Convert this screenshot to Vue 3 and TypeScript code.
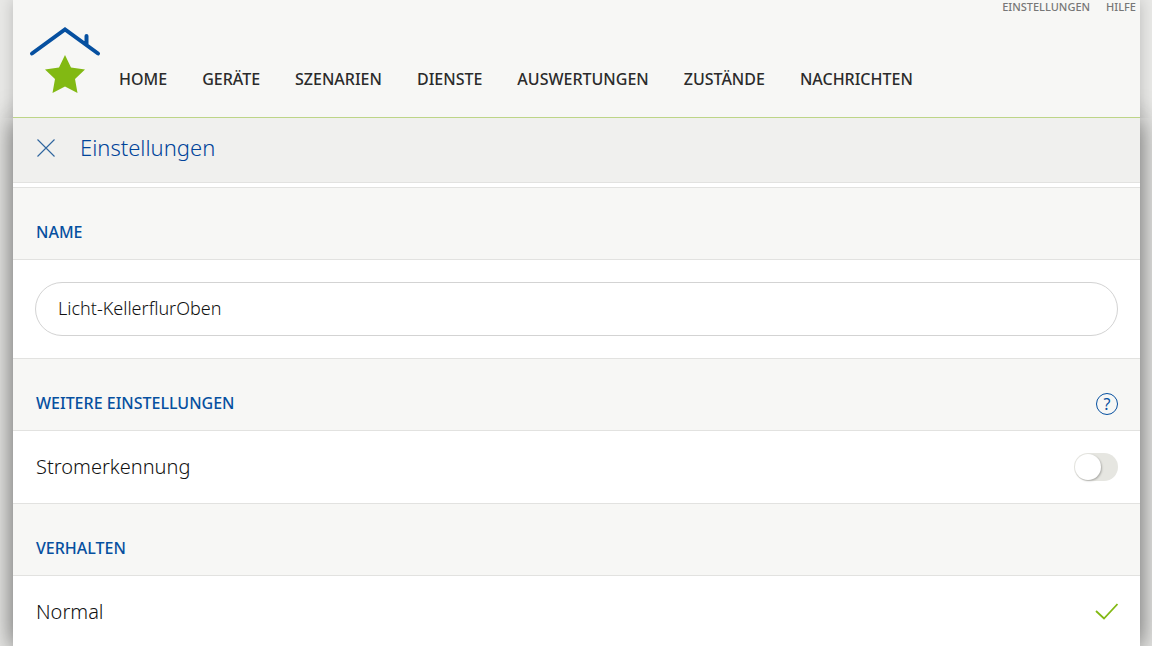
<script setup lang="ts">
import { ref } from 'vue'

const navItems: string[] = [
  'HOME',
  'GERÄTE',
  'SZENARIEN',
  'DIENSTE',
  'AUSWERTUNGEN',
  'ZUSTÄNDE',
  'NACHRICHTEN',
]

const deviceName = ref('Licht-KellerflurOben')
const powerDetection = ref(false)
const behaviour = ref('normal')
</script>

<template>
  <div class="page">
    <header class="top">
      <a class="logo" href="#" aria-label="Startseite">
        <svg width="72" height="68" viewBox="0 0 72 68" aria-hidden="true">
          <path
            d="M3 27.500 L36 3.500 L69 27.500 M57.500 18 V10"
            fill="none"
            stroke="#0650a0"
            stroke-width="4"
            stroke-linecap="round"
            stroke-linejoin="miter"
          />
          <path
            d="M36 29 L42 41.500 L56 43.500 L46 53 L48.500 67 L36 60.500 L23.500 67 L26 53 L16 43.500 L30 41.500 Z"
            fill="#82b913"
          />
        </svg>
      </a>
      <nav class="main-nav">
        <a v-for="item in navItems" :key="item" href="#">{{ item }}</a>
      </nav>
      <nav class="meta-nav">
        <a href="#">EINSTELLUNGEN</a>
        <a href="#">HILFE</a>
      </nav>
    </header>

    <main class="content">
      <div class="title-bar">
        <button class="close" type="button" aria-label="Schließen">
          <svg width="20" height="20" viewBox="0 0 20 20" aria-hidden="true">
            <path d="M1.500 1.500 L18.500 18.500 M18.500 1.500 L1.500 18.500" fill="none" stroke="#2f659f" stroke-width="1.100" />
          </svg>
        </button>
        <h1>Einstellungen</h1>
      </div>

      <section>
        <div class="section-head">
          <h2><label for="device-name">NAME</label></h2>
        </div>
        <div class="field">
          <input id="device-name" v-model="deviceName" type="text" />
        </div>
      </section>

      <section>
        <div class="section-head">
          <h2>WEITERE EINSTELLUNGEN</h2>
          <button class="help" type="button" aria-label="Hilfe">?</button>
        </div>
        <div class="row">
          <label for="power-detection">Stromerkennung</label>
          <input id="power-detection" v-model="powerDetection" class="switch" type="checkbox" role="switch" />
        </div>
      </section>

      <section>
        <div class="section-head">
          <h2>VERHALTEN</h2>
        </div>
        <div class="row">
          <label for="behaviour-normal">Normal</label>
          <span class="choice">
            <input id="behaviour-normal" v-model="behaviour" type="radio" name="behaviour" value="normal" />
            <svg v-if="behaviour === 'normal'" width="24" height="20" viewBox="0 0 24 20" aria-hidden="true">
              <path d="M2 9 L10 16.500 L23.500 2" fill="none" stroke="#82b913" stroke-width="1.800" />
            </svg>
          </span>
        </div>
      </section>
    </main>
  </div>
</template>

<style>
html {
  background: #e8e8e6;
  scrollbar-width: none;
}

body {
  margin: 0;
}
</style>

<style scoped>
* {
  box-sizing: border-box;
}

.page {
  display: flex;
  flex-direction: column;
  min-height: 100vh;
  padding: 0 12px 0 13px;
  overflow: hidden;
  font-family: 'Noto Sans', 'Open Sans', sans-serif;
  color: #333;
}

.top {
  position: relative;
  z-index: 1;
  display: flex;
  align-items: flex-end;
  height: 118px;
  border-bottom: 1px solid #bdd587;
  background: #f7f7f5;
  box-shadow: 0 0 14px rgba(0, 0, 0, 0.2);
  clip-path: inset(0 -13px 0 -13px);
}

.logo {
  display: block;
  margin: 0 18px 23px 16px;
}

.logo svg {
  display: block;
}

.main-nav {
  display: flex;
  gap: 35px;
  flex: 1;
  padding-bottom: 26px;
}

.main-nav a {
  font-size: 16px;
  font-weight: 500;
  line-height: 24px;
  color: #2b2b2b;
  text-decoration: none;
}

.meta-nav {
  display: flex;
  align-self: flex-start;
  gap: 16px;
  padding-right: 4px;
}

.meta-nav a {
  font-size: 11px;
  font-weight: 500;
  line-height: 14px;
  color: #777;
  text-decoration: none;
}

.content {
  flex: 1;
  background: #fff;
  box-shadow: 0 0 24px rgba(0, 0, 0, 0.6);
}

.title-bar {
  display: flex;
  align-items: center;
  gap: 24px;
  height: 65px;
  margin-bottom: 4px;
  padding: 0 23px 5px;
  border-bottom: 1px solid #e2e2e0;
  background: #f0f0ee;
}

.close {
  display: flex;
  padding: 0;
  border: 0;
  background: none;
}

h1 {
  margin: 0;
  padding-bottom: 2px;
  font-size: 22px;
  font-weight: 300;
  line-height: 32px;
  color: #00449a;
}

.section-head {
  display: flex;
  align-items: center;
  justify-content: space-between;
  height: 73px;
  padding: 18px 22px 0 23px;
  border-top: 1px solid #e2e2e0;
  border-bottom: 1px solid #e2e2e0;
  background: #f7f7f5;
}

h2 {
  margin: 0;
  padding-bottom: 2px;
  font-size: 16px;
  font-weight: 500;
  line-height: 24px;
  color: #0650a0;
}

.help {
  width: 22px;
  height: 22px;
  padding: 0;
  border: 1px solid #0650a0;
  border-radius: 50%;
  background: none;
  font-family: inherit;
  font-size: 16px;
  line-height: 20px;
  color: #0650a0;
}

.field {
  padding: 22px;
}

.field input {
  display: block;
  width: 100%;
  height: 54px;
  padding: 0 22px 2px;
  border: 1px solid #d3d3d3;
  border-radius: 27px;
  outline: none;
  background: #fff;
  font-family: inherit;
  font-size: 18px;
  font-weight: 300;
  color: #111;
}

.row {
  display: flex;
  align-items: center;
  justify-content: space-between;
  height: 72px;
  padding: 0 22px 0 23px;
  font-size: 20px;
  font-weight: 300;
  line-height: 28px;
  color: #111;
}

.switch {
  display: flex;
  width: 44px;
  height: 28px;
  margin: 0;
  padding: 1px;
  border-radius: 14px;
  background: #e6e6e1;
  appearance: none;
}

.switch::before {
  width: 26px;
  height: 26px;
  border-radius: 50%;
  background: #fff;
  box-shadow: 1px 1px 2px rgba(0, 0, 0, 0.25);
  content: '';
}

.switch:checked {
  justify-content: flex-end;
  background: #82b913;
}

.choice {
  display: grid;
}

.choice input,
.choice svg {
  grid-area: 1 / 1;
}

.choice input {
  width: 24px;
  height: 20px;
  margin: 0;
  appearance: none;
}
</style>
